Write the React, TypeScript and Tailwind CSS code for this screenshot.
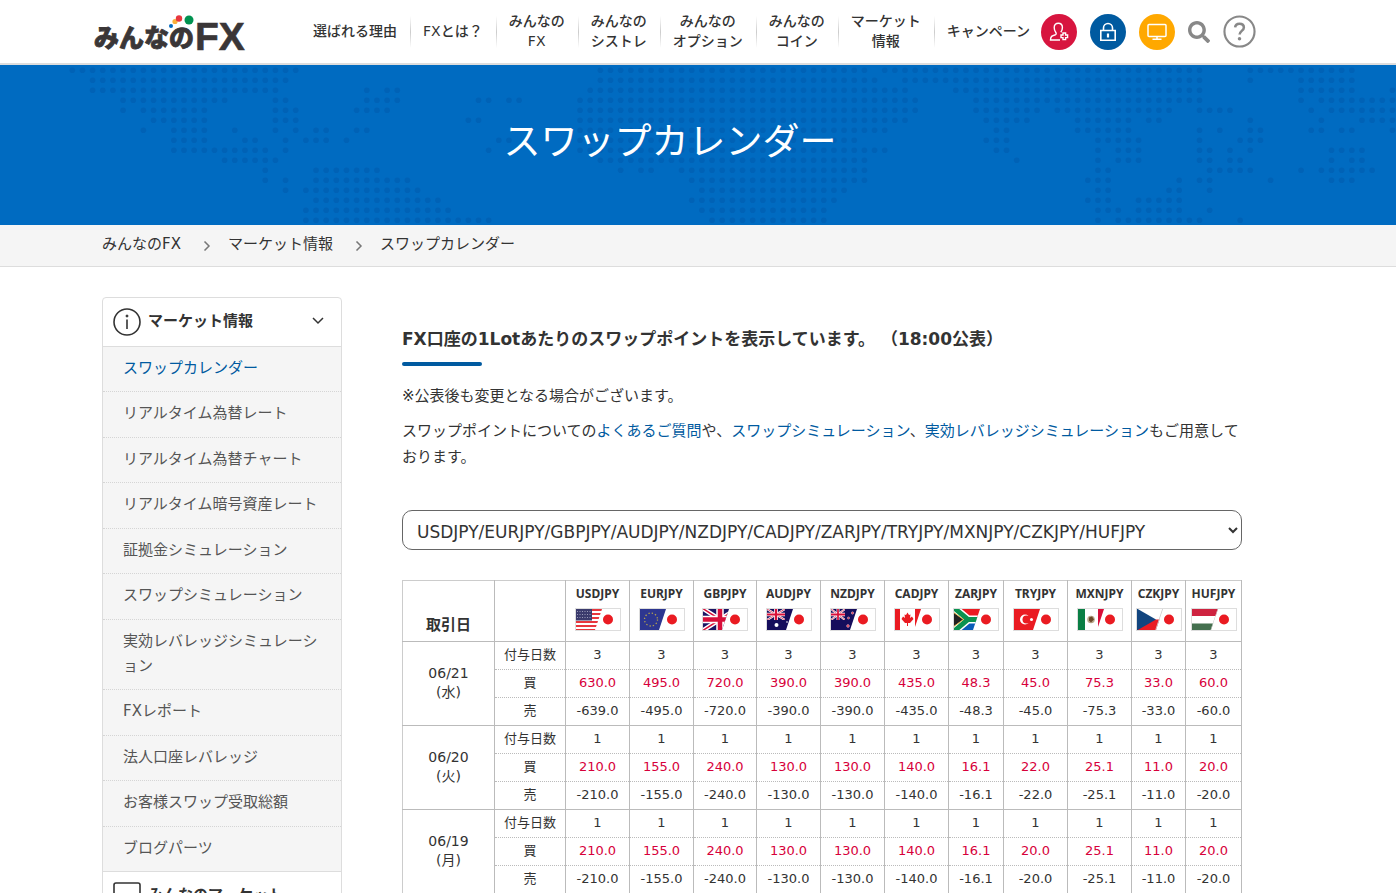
import { FaSearch } from "react-icons/fa";

export default function App() {
  return (
    <div className="min-h-screen bg-white font-['DejaVu_Sans','Noto_Sans_CJK_JP',sans-serif] text-[15px] leading-[26px] text-[#333]">
      <Header />
      <Banner />
      <Breadcrumb />
      <div className="pr-[52px]">
        <div className="mx-auto flex max-w-[1140px] items-start gap-[60px] pt-[30px]">
          <Sidebar />
          <Main />
        </div>
      </div>
    </div>
  )
}

const navOptions = [
  ["選ばれる理由"],
  ["FXとは？"],
  ["みんなの", "FX"],
  ["みんなの", "シストレ"],
  ["みんなの", "オプション"],
  ["みんなの", "コイン"],
  ["マーケット", "情報"],
  ["キャンペーン"],
]

function Header() {
  return (
    <header className="border-b-2 border-[#ddd] pr-[46px]">
      <div className="mx-auto flex h-[63px] max-w-[1162px] items-center justify-between">
        <a href="#" aria-label="みんなのFX">
          <Logo />
        </a>
        <div className="flex items-center">
          <nav>
            <ul className="flex items-center">
              {
                navOptions.map((lines, i) => (
                  <li key={i} className="flex items-center">
                    { i > 0 && <span className="-mr-px h-8 w-px bg-linear-to-b from-white via-[#ccc] to-white" /> }
                    <a href="#" className="px-[13px] pb-0.5 text-center text-sm leading-5 font-medium whitespace-nowrap">
                      { lines.map((line) => <span key={line} className="block">{ line }</span>) }
                    </a>
                  </li>
                ))
              }
            </ul>
          </nav>
          <HeaderIcons />
        </div>
      </div>
    </header>
  )
}

function Logo() {
  return (
    <svg width="152" height="54" viewBox="0 -7 152 54" className="block">
      <text x="0" y="35" fontSize="25" fontWeight="900" fill="#3a3637" stroke="#3a3637" strokeWidth=".8" fontFamily="Noto Sans CJK JP, sans-serif">みんなの</text>
      <text x="101" y="38" fontSize="39" fontWeight="700" fill="#3a3637" stroke="#3a3637" strokeWidth=".6" fontFamily="Liberation Sans, sans-serif">FX</text>
      <circle cx="77" cy="14" r="2" fill="#0068c0" />
      <circle cx="81" cy="9.500" r="2.600" fill="#fbb03b" />
      <circle cx="85" cy="6.500" r="3.200" fill="#e8373e" />
      <circle cx="95" cy="8" r="4.500" fill="#009250" />
    </svg>
  )
}

function HeaderIcons() {
  return (
    <div className="-ml-0.5 flex items-center gap-[13px]">
      <a href="#" aria-label="口座開設" className="flex size-9 items-center justify-center rounded-full bg-[#d7153f]">
        <svg width="20" height="20" viewBox="0 0 20 20" fill="none" stroke="#fff" strokeWidth="1.4">
          <path d="M11 18H1.5c0-3.600 1.300-4.300 5-5.300.8-.3.900-1.500.2-2.400C5.600 8.900 5.200 7.400 5.200 5.500 5.200 2.800 7 1.200 9.300 1.200s4.100 1.600 4.100 4.300c0 1.900-.5 3.400-1.600 4.800" />
          <path d="M14 11v2h-2v2.600h2v2h2.600v-2h2V13h-2v-2z" />
        </svg>
      </a>
      <a href="#" aria-label="ログイン" className="flex size-9 items-center justify-center rounded-full bg-[#005aa0]">
        <svg width="18" height="20" viewBox="0 0 18 20" fill="none" stroke="#fff" strokeWidth="1.600">
          <path d="M1.800 8.500h14.400v9.700H1.800zM4.500 8.500V6a4.500 4.500 0 0 1 9 0v2.500" />
          <path d="M9 11.500v4" strokeWidth="2.200" />
        </svg>
      </a>
      <a href="#" aria-label="取引ツール" className="flex size-9 items-center justify-center rounded-full bg-[#ffa800]">
        <svg width="20" height="18" viewBox="0 0 20 18" fill="none" stroke="#fff" strokeWidth="1.500">
          <rect x="1" y="1.500" width="18" height="12" rx="1" />
          <path d="M10 13.500V16M5.500 16.200h9" />
        </svg>
      </a>
      <a href="#" aria-label="検索" className="text-[#888]">
        <FaSearch size={22} />
      </a>
      <a href="#" aria-label="ヘルプ">
        <svg width="33" height="33" viewBox="0 0 34 34" fill="none" stroke="#888">
          <circle cx="17" cy="17" r="15.500" strokeWidth="2.200" />
          <path d="M12.500 12.800c.2-2.500 2-3.900 4.500-3.900 2.600 0 4.500 1.500 4.500 3.900 0 3.600-4.400 3.600-4.400 7.400" strokeWidth="2.600" />
          <circle cx="17" cy="24.500" r="1.800" fill="#888" stroke="none" />
        </svg>
      </a>
    </div>
  )
}

// runs of dots in each row of the world map: [first column, last column]
const mapRows: [number, number][][] = [
  [[0, 22], [52, 78], [80, 111], [116, 126]],
  [[2, 21], [52, 79], [82, 111], [116, 116], [121, 126]],
  [[2, 20], [29, 29], [31, 32], [51, 82], [87, 111], [121, 126], [130, 130]],
  [[5, 15], [20, 21], [29, 32], [40, 41], [43, 44], [50, 83], [89, 111], [121, 121], [123, 130]],
  [[5, 5], [7, 13], [20, 22], [28, 31], [50, 83], [89, 95], [97, 108], [111, 114], [122, 122], [124, 130]],
  [[8, 13], [20, 22], [39, 40], [50, 82], [90, 94], [99, 104], [106, 107], [116, 116], [123, 123], [127, 130]],
  [[7, 7], [10, 13], [16, 16], [20, 20], [22, 22], [24, 25], [28, 29], [50, 80], [91, 92], [99, 104], [111, 111], [113, 113], [116, 117], [122, 123], [125, 126], [130, 130]],
  [[10, 13], [17, 18], [21, 21], [23, 25], [27, 27], [42, 43], [50, 77], [90, 92], [101, 105], [111, 111], [115, 117]],
  [[10, 19], [21, 21], [41, 41], [50, 80], [91, 92], [101, 101], [103, 105], [111, 112], [114, 114], [116, 116], [124, 127]],
  [[15, 20], [52, 78], [93, 93], [101, 101], [103, 105], [111, 112], [114, 115], [124, 124], [126, 127]],
  [[19, 19], [24, 30], [54, 54], [56, 57], [60, 78], [101, 102], [112, 116], [121, 121], [123, 128]],
  [[19, 19], [21, 21], [24, 33], [61, 78], [100, 102], [109, 109], [111, 112], [118, 118], [124, 126]],
  [[21, 21], [23, 34], [62, 76], [101, 102], [108, 109], [112, 112]],
  [[24, 36], [61, 75], [100, 102], [105, 109]],
  [[23, 37], [62, 74], [101, 103], [105, 109], [112, 112]],
  [[23, 41], [63, 74], [101, 101], [103, 111], [115, 115]],
]

function WorldMap() {
  return (
    <svg className="absolute inset-0 h-full w-full" viewBox="0 0 1396 160" preserveAspectRatio="xMidYMid slice" fill="#0062b6" aria-hidden="true">
      {
        mapRows.map((runs, row) => runs.map(([from, to]) => (
          Array.from({ length: to - from + 1 }, (_, i) => (
            <circle key={`${row}-${from + i}`} cx={72.3 + (from + i) * 10.155} cy={5.3 + row * 10} r="2.800" />
          ))
        )))
      }
    </svg>
  )
}

function Banner() {
  return (
    <div className="relative flex h-40 items-center justify-center bg-[#006bc1] pr-[56px]">
      <WorldMap />
      <h1 className="relative pb-1 text-[37px] leading-[56px] text-white [font-kerning:none]">スワップカレンダー</h1>
    </div>
  )
}

function Breadcrumb() {
  return (
    <nav className="border-b border-[#ddd] bg-[#f5f5f5] pr-[52px]">
      <ol className="mx-auto flex h-[41px] max-w-[1140px] items-center pb-1">
        <li><a href="#">みんなのFX</a></li>
        <Arrow />
        <li><a href="#">マーケット情報</a></li>
        <Arrow />
        <li>スワップカレンダー</li>
      </ol>
    </nav>
  )
}

function Arrow() {
  return (
    <li aria-hidden="true" className="pt-1 pr-[17px] pl-[22px]">
      <svg width="8" height="10" viewBox="0 0 8 10" fill="none" stroke="#777" strokeWidth="1.500">
        <path d="M1.500 .5 6 5 1.500 9.500" />
      </svg>
    </li>
  )
}

const marketLinks = [
  "スワップカレンダー",
  "リアルタイム為替レート",
  "リアルタイム為替チャート",
  "リアルタイム暗号資産レート",
  "証拠金シミュレーション",
  "スワップシミュレーション",
  "実効レバレッジシミュレーション",
  "FXレポート",
  "法人口座レバレッジ",
  "お客様スワップ受取総額",
  "ブログパーツ",
]

function Sidebar() {
  return (
    <aside className="w-60 shrink-0 rounded-t border border-[#ddd]">
      <SideHeading label="マーケット情報" open>
        <circle cx="14" cy="14" r="13" />
        <path d="M14 11.500V21" />
        <circle cx="14" cy="8" r="1" fill="#333" strokeWidth="1" />
      </SideHeading>
      <ul className="flex min-h-[526px] flex-col border-y border-[#ddd] bg-[#f5f5f5] text-[#555]">
        {
          marketLinks.map((label, i) => (
            <li key={label} className="grow border-b border-dotted border-[#d5d5d5] last:border-b-0">
              <a
                href="#"
                aria-current={i === 0 ? "page" : undefined}
                className="block px-5 pt-[9px] pb-[10px] leading-[25px] aria-[current=page]:text-[#005aa0]"
              >
                { label }
              </a>
            </li>
          ))
        }
      </ul>
      <SideHeading label="みんなのマーケット">
        <rect x="1" y="1" width="26" height="18" rx="2" />
        <path d="M9 26h10M14 19v7" />
      </SideHeading>
    </aside>
  )
}

function SideHeading({ label, open, children }: { label: string, open?: boolean, children: React.ReactNode }) {
  return (
    <button type="button" aria-expanded={!!open} className="flex h-12 w-full items-center pr-[17px] pl-[10px] font-bold">
      <svg width="28" height="28" viewBox="0 0 28 28" fill="none" stroke="#333" strokeWidth="1.600">
        { children }
      </svg>
      <span className="ml-[7px] grow pb-0.5 text-left">{ label }</span>
      <svg width="12" height="12" viewBox="0 0 12 12" fill="none" stroke="#333" strokeWidth="1.500">
        <path d={open ? "M1 2l5 5 5-5" : "M1 9l5-5 5 5"} />
      </svg>
    </button>
  )
}

function Main() {
  return (
    <main className="min-w-0 grow pt-[29px]">
      <h2 className="text-[17px] font-bold">FX口座の1Lotあたりのスワップポイントを表示しています。 （18:00公表）</h2>
      <div className="mt-[10px] h-1 w-20 rounded-full bg-[#005aa0]" />
      <p className="mt-[17px]">※公表後も変更となる場合がございます。</p>
      <p className="mt-[9px]">
        スワップポイントについての<TextLink>よくあるご質問</TextLink>や、<TextLink>スワップシミュレーション</TextLink>、<TextLink>実効レバレッジシミュレーション</TextLink>もご用意しております。
      </p>
      <select
        aria-label="通貨ペア"
        className="mt-10 h-10 w-full rounded-[10px] border border-[#666] bg-white pt-1 pl-[10px] text-[17px]"
      >
        <option>{ pairs.map((pair) => pair.name).join("/") }</option>
      </select>
      <SwapTable />
    </main>
  )
}

function TextLink({ children }: { children: React.ReactNode }) {
  return <a href="#" className="text-[#005aa0]">{ children }</a>
}

const pairs = [
  { name: "USDJPY", flag: <UsFlag />, col: "w-16" },
  { name: "EURJPY", flag: <EuFlag />, col: "w-16" },
  { name: "GBPJPY", flag: <GbFlag />, col: "w-[63px]" },
  { name: "AUDJPY", flag: <AuFlag />, col: "w-16" },
  { name: "NZDJPY", flag: <NzFlag />, col: "w-16" },
  { name: "CADJPY", flag: <CaFlag />, col: "w-16" },
  { name: "ZARJPY", flag: <ZaFlag />, col: "w-[55px]" },
  { name: "TRYJPY", flag: <TrFlag />, col: "w-16" },
  { name: "MXNJPY", flag: <MxFlag />, col: "w-16" },
  { name: "CZKJPY", flag: <CzFlag />, col: "w-[54px]" },
  { name: "HUFJPY", flag: <HuFlag />, col: "w-[56px]" },
]

const days = [
  {
    date: "06/21",
    weekday: "水",
    count: "3",
    buy: ["630.0", "495.0", "720.0", "390.0", "390.0", "435.0", "48.3", "45.0", "75.3", "33.0", "60.0"],
    sell: ["-639.0", "-495.0", "-720.0", "-390.0", "-390.0", "-435.0", "-48.3", "-45.0", "-75.3", "-33.0", "-60.0"],
  },
  {
    date: "06/20",
    weekday: "火",
    count: "1",
    buy: ["210.0", "155.0", "240.0", "130.0", "130.0", "140.0", "16.1", "22.0", "25.1", "11.0", "20.0"],
    sell: ["-210.0", "-155.0", "-240.0", "-130.0", "-130.0", "-140.0", "-16.1", "-22.0", "-25.1", "-11.0", "-20.0"],
  },
  {
    date: "06/19",
    weekday: "月",
    count: "1",
    buy: ["210.0", "155.0", "240.0", "130.0", "130.0", "140.0", "16.1", "20.0", "25.1", "11.0", "20.0"],
    sell: ["-210.0", "-155.0", "-240.0", "-130.0", "-130.0", "-140.0", "-16.1", "-20.0", "-25.1", "-11.0", "-20.0"],
  },
]

function SwapTable() {
  return (
    <table className="mt-[30px] w-full table-fixed border-collapse border border-[#ccc] text-center text-[13px] leading-5">
      <colgroup>
        <col className="w-[92px]" />
        <col className="w-[71px]" />
        { pairs.map((pair) => <col key={pair.name} className={pair.col} />) }
      </colgroup>
      <thead>
        <tr className="h-[61px] border-b border-[#bbb]">
          <th scope="col" className="border-r border-[#bbb] pb-[6px] align-bottom text-[15px]">取引日</th>
          <td className="border-r border-[#bbb]" />
          {
            pairs.map((pair) => (
              <th key={pair.name} scope="col" className="border-r border-[#bbb] pt-1 align-top font-['Noto_Sans'] text-xs leading-[18px]">
                { pair.name }
                <Flag>{ pair.flag }</Flag>
              </th>
            ))
          }
        </tr>
      </thead>
      {
        days.map((day) => (
          <tbody key={day.date} className="border-b border-[#bbb]">
            <tr className="h-7">
              <th scope="rowgroup" rowSpan={3} className="border-r border-[#bbb] pb-0.5 text-sm leading-[19px] font-normal">
                { day.date }<br />({ day.weekday })
              </th>
              <RowCells label="付与日数" values={pairs.map(() => day.count)} />
            </tr>
            <tr className="h-7 text-[#d7003a]">
              <RowCells label="買" values={day.buy} />
            </tr>
            <tr className="h-7">
              <RowCells label="売" values={day.sell} last />
            </tr>
          </tbody>
        ))
      }
    </table>
  )
}

function RowCells({ label, values, last }: { label: string, values: string[], last?: boolean }) {
  const line = last ? "border-r border-r-[#bbb] pb-0.5" : "border-r border-b border-r-[#bbb] border-b-[#bbb] pb-0.5 [border-bottom-style:dotted]"

  return (
    <>
      <th scope="row" className={`${line} font-normal text-[#333]`}>{ label }</th>
      { values.map((value, i) => <td key={i} className={line}>{ value }</td>) }
    </>
  )
}

// left part: the foreign flag cut on a slant, right part: Japan
function Flag({ children }: { children: React.ReactNode }) {
  return (
    <svg width="46" height="23" viewBox="0 0 46 23" className="mx-auto mt-[5px] block" aria-hidden="true">
      <clipPath id="slant">
        <path d="M1 1h26l-7 21H1z" />
      </clipPath>
      <rect x=".5" y=".5" width="45" height="22" fill="#fff" stroke="#ddd" />
      <g clipPath="url(#slant)">{ children }</g>
      <circle cx="33" cy="11.500" r="5" fill="#ea1b22" />
    </svg>
  )
}

function UsFlag() {
  return (
    <>
      <path d="M1 2h28M1 6h28M1 10h28M1 14h28M1 18h28M1 22h28" stroke="#e8363d" strokeWidth="1.800" />
      <rect x="1" y="1" width="16" height="11.500" fill="#3b3b6d" />
      <path d="M2 3.500h14M2 6.500h14M2 9.500h14" stroke="#9a9ab8" strokeDasharray="1 1.500" />
    </>
  )
}

function EuFlag() {
  return (
    <>
      <rect width="28" height="23" fill="#2d3690" />
      <circle cx="12" cy="11.500" r="6.500" fill="none" stroke="#b5a24d" strokeWidth="1.300" strokeDasharray="1.300 2.100" />
    </>
  )
}

function UnionJack() {
  return (
    <>
      <path d="M0 0l36 23M36 0 0 23" stroke="#fff" strokeWidth="4.500" />
      <path d="M0 0l36 23M36 0 0 23" stroke="#d80f3a" strokeWidth="1.500" />
      <path d="M18 0v23M0 11.500h36" stroke="#fff" strokeWidth="7.500" />
      <path d="M18 0v23M0 11.500h36" stroke="#d80f3a" strokeWidth="4.500" />
    </>
  )
}

function GbFlag() {
  return (
    <>
      <rect width="28" height="23" fill="#1b1564" />
      <UnionJack />
    </>
  )
}

function AuFlag() {
  return (
    <>
      <rect width="28" height="23" fill="#150d5c" />
      <svg x="1" y="1" width="18" height="11" viewBox="0 0 36 23" preserveAspectRatio="none"><UnionJack /></svg>
      <circle cx="10.500" cy="17" r="2" fill="#fff" />
      <circle cx="21" cy="14" r=".8" fill="#fff" />
    </>
  )
}

function NzFlag() {
  return (
    <>
      <rect width="28" height="23" fill="#150d5c" />
      <svg x="1" y="1" width="14" height="11" viewBox="0 0 36 23" preserveAspectRatio="none"><UnionJack /></svg>
      <g fill="#d8324f" stroke="#fff" strokeWidth=".4">
        <circle cx="22.500" cy="5" r="1.200" />
        <circle cx="18.500" cy="10" r="1.100" />
        <circle cx="18" cy="18" r="1.400" />
      </g>
    </>
  )
}

function CaFlag() {
  return (
    <>
      <path d="M1 0h5v23H1zM21 0h7v23h-7z" fill="#ea1b22" />
      <path d="M13.500 4.500l1.500 2.500 1.500-.5-.5 3.500 2-1.500 1.500 2.500-3.500 4h-2v3h-1v-3h-2l-3.500-4L9 8.500l2 1.500-.5-3.500 1.500.5z" fill="#ea1b22" />
    </>
  )
}

function ZaFlag() {
  return (
    <>
      <path d="M0 0h28v12H0z" fill="#ea1b22" />
      <path d="M0 12h28v11H0z" fill="#0a5cb8" />
      <path d="M0-1l15 12.500L0 24M15 11.500h14" fill="none" stroke="#fff" strokeWidth="8" />
      <path d="M0-1l15 12.500L0 24M15 11.500h14" fill="none" stroke="#0a9250" strokeWidth="5" />
      <path d="M0 4l10.500 7.500L0 19z" fill="#222" stroke="#e8b84a" />
    </>
  )
}

function TrFlag() {
  return (
    <>
      <rect width="28" height="23" fill="#ea1b22" />
      <circle cx="12" cy="11.500" r="5" fill="#fff" />
      <circle cx="13.500" cy="11.500" r="4" fill="#ea1b22" />
      <circle cx="18.500" cy="11.500" r="1.500" fill="#fff" />
    </>
  )
}

function MxFlag() {
  return (
    <>
      <rect x="1" width="7" height="23" fill="#0a7f45" />
      <rect x="21" width="8" height="23" fill="#d80f3a" />
      <circle cx="14" cy="11.500" r="3.800" fill="#b9a88c" />
      <path d="M12 9.500l3-1 2 3-3 3-2-2z" fill="#6b4a2b" />
    </>
  )
}

function CzFlag() {
  return (
    <>
      <path d="M0 11.500h28V23H0z" fill="#ea1b22" />
      <path d="M0 0l20 11.500L0 23z" fill="#12457f" />
      <path d="M27 1l-7 21" stroke="#ccc" strokeWidth="1.500" />
    </>
  )
}

function HuFlag() {
  return (
    <>
      <path d="M0 0h28v8H0z" fill="#ce2340" />
      <path d="M0 15.500h28V23H0z" fill="#44704f" />
      <path d="M27 1l-7 21" stroke="#ccc" />
    </>
  )
}
